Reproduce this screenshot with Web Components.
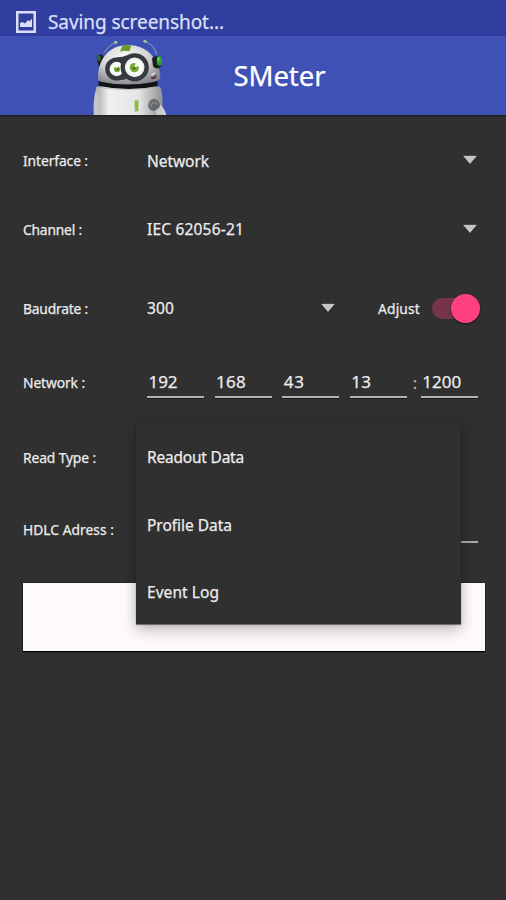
<!DOCTYPE html>
<html lang="en">
<head>
<meta charset="utf-8">
<title>SMeter</title>
<style>
html,body{margin:0;height:100%;background:#303030;overflow:hidden}
body{font-family:"Noto Sans","Open Sans",sans-serif;color:#ececec}
</style>
</head>
<body>
<smeter-app></smeter-app>
<script>
const define = (name, html, setup) => {
  const t = document.createElement('template');
  t.innerHTML = html;
  customElements.define(name, class extends HTMLElement {
    connectedCallback() {
      if (this.shadowRoot) return;
      this.attachShadow({mode: 'open'}).append(t.content.cloneNode(true));
      if (setup) setup(this, this.shadowRoot);
    }
  });
};

/* One line of text, tracked so that it fills the width given in pixels. */
define('fit-text', `<style>
:host{display:block;white-space:pre;line-height:1.3;flex:none;-webkit-text-stroke:.25px currentColor}
span{display:inline-block}
</style><span><slot></slot></span>`, (el, root) => {
  el.style.fontSize = el.getAttribute('size') + 'px';
  const s = root.querySelector('span');
  const n = el.textContent.length;
  const target = +el.getAttribute('width');
  s.style.letterSpacing = (target - s.getBoundingClientRect().width) / n + 'px';
});

define('drop-arrow', `<style>:host{display:block;width:16px;height:10px;flex:none}svg{display:block}</style>
<svg width="16" height="10" viewBox="0 0 16 10"><path d="M0 0H16L8 10Z" fill="#1d1d1d"/><path d="M1 .8H15L8 9Z" fill="#c6c6c6"/></svg>`);

define('status-bar', `<style>
:host{display:flex;align-items:center;height:36px;box-sizing:border-box;padding:7px 0 0 16px;gap:12px;background:#303f9f;color:#dadff5}
svg{display:block;margin-top:1px}
::slotted(*){margin-top:2px}
</style>
<svg width="20" height="22" viewBox="0 0 20 22"><path fill="#dadff5" fill-rule="evenodd" d="M0 0H20V22H0ZM2.5 2.5V19.5H17.5V2.5Z"/><path d="M4 16V12L6.5 11L9 12.5L12 9L13.5 10.5L16 7.5V16Z" fill="#dadff5"/></svg>
<slot></slot>`);

define('robot-mascot', `<style>:host{display:block;width:75px;height:79px;flex:none}svg{display:block}</style>
<svg width="75" height="79" viewBox="36 18 225 237">
<defs>
<radialGradient id="h" cx=".42" cy=".3" r=".72"><stop offset="0" stop-color="#fafafa"/><stop offset=".55" stop-color="#d2d2d4"/><stop offset="1" stop-color="#85878b"/></radialGradient>
<linearGradient id="b" x2="1"><stop offset="0" stop-color="#aaa"/><stop offset=".2" stop-color="#f1f1f1"/><stop offset=".65" stop-color="#e4e4e4"/><stop offset="1" stop-color="#8e9093"/></linearGradient>
<radialGradient id="e"><stop offset=".5" stop-color="#fff"/><stop offset="1" stop-color="#d6dcd8"/></radialGradient>
</defs>
<path d="M72 68Q87 45 105 38M230 75Q225 48 198 35" fill="none" stroke="#8ea2b7" stroke-width="3"/>
<circle cx="107" cy="37" r="5" fill="#8bd092"/><circle cx="195" cy="34" r="5" fill="#8bd092"/>
<path d="M49 175Q39 205 41 255H62V172Z" fill="#c4c6c8"/>
<path d="M47 172Q70 164 140 170Q215 164 243 173Q250 206 247 255H59Q55 235 57 210Z" fill="url(#b)"/>
<path d="M51 171Q140 187 239 170" fill="none" stroke="#aaa" stroke-width="2"/>
<path d="M57 150Q146 173 232 150L233 168Q145 187 55 167Z" fill="#111214"/>
<path d="M53 77Q63 69 71 79L61 112Q51 103 52 86Z" fill="#182018"/><ellipse cx="57" cy="85" rx="5" ry="9" fill="#326b2f"/>
<path d="M54 147C52 93 83 47 141 45C207 43 239 97 241 141Q240 152 221 156Q142 171 65 156Q55 154 54 147Z" fill="url(#h)"/>
<path d="M128 46Q142 43 154 48L148 64Q133 60 120 65Z" fill="#6b9926"/>
<path d="M216 85Q223 76 234 80L245 91L242 110Q231 122 219 109Z" fill="#181e19"/>
<ellipse cx="238" cy="93" rx="8" ry="14" fill="#28a535"/><ellipse cx="235" cy="87" rx="3" ry="5" fill="#70e470"/>
<path d="M112 87Q132 86 142 80M112 145Q130 146 142 140" fill="none" stroke="#383c40" stroke-width="10"/>
<circle cx="110" cy="117" r="28" fill="url(#e)" stroke="#363a3e" stroke-width="13"/>
<circle cx="164" cy="112" r="36" fill="url(#e)" stroke="#363a3e" stroke-width="13"/>
<circle cx="111" cy="118" r="9" fill="#72a62d"/><path d="M104 110L112 114L114 108L107 106Z" fill="#fff"/><circle cx="113" cy="118" r="3" fill="#395d20"/>
<circle cx="163" cy="113" r="14" fill="#79ab35"/><path d="M164 111L167 98L180 108Z" fill="#fff"/><circle cx="162" cy="115" r="4" fill="#3e6521"/>
<path d="M214 140Q222 143 227 134L229 142Q222 151 213 145Z" fill="#642c30"/><path d="M214 133Q220 135 224 128" fill="none" stroke="#eee" stroke-width="4"/>
<path d="M164 212L175 210V243L165 245Z" fill="#83bd30" stroke="#b9c6a7" stroke-width="2"/>
<path d="M229 215Q252 228 259 255H230Z" fill="#d6d7d9"/>
<circle cx="222" cy="225" r="18" fill="#66696d"/><path d="M207 225A16 16 0 0 1 239 219M213 230A10 10 0 0 1 232 224" fill="none" stroke="#999" stroke-width="3"/><path d="M226 242Q236 230 247 236L252 255H233Z" fill="#c8cacd"/>
</svg>`);

define('app-bar', `<style>
:host{display:flex;align-items:center;height:79px;box-sizing:border-box;padding-left:92px;gap:66.5px;background:#3f51b5;color:#fff;box-shadow:0 1px 2px #1b1b18}
</style><robot-mascot></robot-mascot><slot></slot>`);

define('form-row', `<style>
:host{display:grid;grid-template-columns:124px 331px;align-items:center;padding-left:23px}
.field{display:flex;align-items:center}
</style><slot name="label"></slot><div class="field"><slot></slot></div>`);

define('spinner-field', `<style>
:host{display:flex;align-items:center;justify-content:space-between;flex:none}
drop-arrow{margin-top:-1px}
</style><slot></slot><drop-arrow></drop-arrow>`, el => {
  el.style.width = el.getAttribute('width') + 'px';
});

define('text-field', `<style>
:host{display:block;width:57px;height:30px;box-sizing:border-box;padding-left:1.5px;padding-top:3px;border-bottom:2px solid #b3b3b3;box-shadow:0 1px 0 #1b1b1b;flex:none}
</style><slot></slot>`);

define('toggle-switch', `<style>
:host{display:flex;align-items:center;justify-content:flex-end;width:48px;height:21px;border-radius:11px;background:#75344c;flex:none}
i{display:block;width:29px;height:29px;border-radius:50%;background:#ff4081;box-shadow:0 1px 2px #181818;flex:none}
</style><i></i>`);

define('popup-menu', `<style>
:host{position:absolute;left:136px;top:423px;width:325px;height:201px;display:grid;grid-template-rows:68px 67.5px 67.5px;align-items:center;padding-left:11px;box-sizing:border-box;background:#303030;box-shadow:0 1px 1px rgba(0,0,0,.45),0 7px 14px rgba(0,0,0,.18),0 2px 12px rgba(0,0,0,.12)}
</style><slot></slot>`);

define('smeter-app', `<style>
:host{display:block;position:relative;height:900px;width:506px;background:#303030;overflow:hidden}
main{display:grid;grid-template-rows:68px 69px 89px 60px 89px 55px 68px;padding-top:12px}
.nets{display:flex;align-items:center;gap:10.6px}
.go{margin:26px 21px 0 23px;height:68px;background:#fffafa;box-shadow:0 0 1px #000,0 1px 1px #000}
.colon{margin:0 4px 0 6px;color:#bbb}
.hdlc{margin-left:auto;width:331px;border-bottom:2px solid #aaa;height:25px}
footer{position:absolute;left:0;right:0;bottom:0;height:1px;background:#352b30}
</style>
<status-bar><fit-text size="19" width="176">Saving screenshot...</fit-text></status-bar>
<app-bar><fit-text size="27.5" width="92">SMeter</fit-text></app-bar>
<main>
<form-row><fit-text slot="label" size="13.8" width="65">Interface :</fit-text>
<spinner-field width="331"><fit-text size="15.5" width="62">Network</fit-text></spinner-field></form-row>
<form-row><fit-text slot="label" size="13.8" width="59">Channel :</fit-text>
<spinner-field width="331"><fit-text size="15.5" width="97">IEC 62056-21</fit-text></spinner-field></form-row>
<form-row><fit-text slot="label" size="13.8" width="65">Baudrate :</fit-text>
<spinner-field width="189"><fit-text size="15.5" width="27">300</fit-text></spinner-field>
<fit-text style="margin-left:42px;margin-right:12px" size="13.8" width="42">Adjust</fit-text><toggle-switch></toggle-switch></form-row>
<form-row><fit-text slot="label" size="13.8" width="62">Network :</fit-text>
<div class="nets"><text-field><fit-text size="17" width="29">192</fit-text></text-field><text-field><fit-text size="17" width="30">168</fit-text></text-field><text-field><fit-text size="17" width="21">43</fit-text></text-field><text-field><fit-text size="17" width="20">13</fit-text></text-field></div>
<fit-text class="colon" size="16" width="4">:</fit-text><text-field><fit-text size="17" width="39">1200</fit-text></text-field></form-row>
<form-row><fit-text slot="label" size="13.8" width="73">Read Type :</fit-text>
<spinner-field width="331"></spinner-field></form-row>
<form-row><fit-text slot="label" size="13.8" width="91">HDLC Adress :</fit-text>
<div class="hdlc"></div></form-row>
<div class="go"></div>
</main>
<popup-menu><fit-text size="15.5" width="97">Readout Data</fit-text><fit-text size="15.5" width="85">Profile Data</fit-text><fit-text size="15.5" width="72">Event Log</fit-text></popup-menu>
<footer></footer>`);
</script>
</body>
</html>
